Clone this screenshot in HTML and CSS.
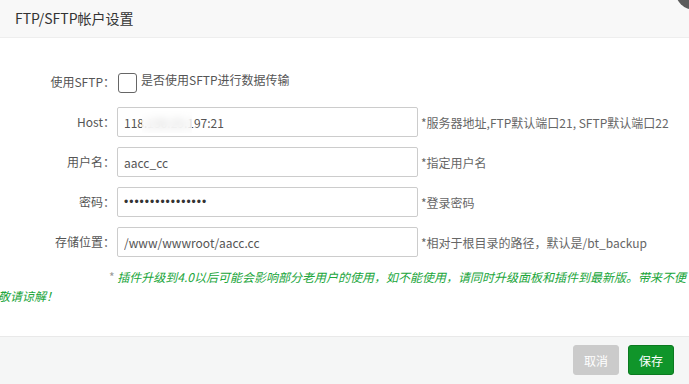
FILE: index.html
```html
<!DOCTYPE html>
<html lang="zh-CN">
<head>
  <meta charset="UTF-8" />
  <title>FTP/SFTP帐户设置</title>
  <link rel="stylesheet" href="styles.css">
</head>
<body>
  <div class="layer">
    <div class="layer-title">FTP/SFTP帐户设置</div>
    <span class="layer-close"></span>

    <div class="layer-content">
      <div class="line">
        <span class="tname">使用SFTP：</span>
        <label class="check-wrap">
          <span class="check-box"></span>
          <span>是否使用SFTP进行数据传输</span>
        </label>
      </div>
      <div class="line">
        <span class="tname">Host：</span>
        <div class="field">
          <input class="bt-input" type="text" value="118.130.25.197:21" />
          <span class="mask"></span>
        </div>
        <span class="tips">*服务器地址,FTP默认端口21, SFTP默认端口22</span>
      </div>
      <div class="line">
        <span class="tname">用户名：</span>
        <input class="bt-input" type="text" value="aacc_cc" />
        <span class="tips">*指定用户名</span>
      </div>
      <div class="line">
        <span class="tname">密码：</span>
        <input class="bt-input pwd" type="password" value="aacc_cc_password" />
        <span class="tips">*登录密码</span>
      </div>
      <div class="line">
        <span class="tname">存储位置：</span>
        <input class="bt-input" type="text" value="/www/wwwroot/aacc.cc" />
        <span class="tips">*相对于根目录的路径，默认是/bt_backup</span>
      </div>
      <p class="notice"><span class="star">*</span> <em>插件升级到4.0以后可能会影响部分老用户的使用，如不能使用，请同时升级面板和插件到最新版。带来不便<br>敬请谅解！</em></p>
    </div>

    <div class="layer-btn">
      <button class="btn btn-cancel">取消</button>
      <button class="btn btn-save">保存</button>
    </div>
  </div>
</body>
</html>
```

FILE: styles.css
```css
body {
  margin: 0;
  font-family: "Noto Sans CJK SC", "Noto Sans", sans-serif;
  font-size: 12px;
  color: #555;
  background: #fff;
  overflow: hidden;
}

.layer {
  position: relative;
  height: 100vh;
  display: flex;
  flex-direction: column;
}

.layer-title {
  height: 37px;
  line-height: 36px;
  padding: 0 15px;
  font-size: 14px;
  color: #333;
  background: #f8f8f8;
  border-bottom: 1px solid #eee;
}

.layer-close {
  position: absolute;
  right: -26px;
  top: -30px;
  width: 40px;
  height: 40px;
  border-radius: 50%;
  background: #5c5c5c;
}

.layer-content {
  flex: 1;
  padding-top: 29px;
}

.line {
  display: flex;
  align-items: center;
  height: 30px;
  margin-bottom: 10px;
}

.tname {
  width: 115px;
  padding-right: 2px;
  text-align: right;
  color: #555;
  position: relative;
  top: -1px;
}

.check-wrap {
  display: flex;
  align-items: center;
  color: #555;
  margin-left: 1px;
}

.check-wrap span:last-child {
  position: relative;
  top: -3px;
}

.check-box {
  width: 17px;
  height: 18px;
  border: 1px solid #666;
  border-radius: 3px;
  margin-right: 4px;
  margin-top: 2px;
}

.field {
  position: relative;
  display: flex;
}

.bt-input {
  width: 301px;
  height: 30px;
  box-sizing: border-box;
  border: 1px solid #ccc;
  border-radius: 2px;
  padding: 0 6px;
  font-family: inherit;
  font-size: 12px;
  color: #555;
  outline: none;
}

.bt-input.pwd {
  font-family: "Liberation Sans", sans-serif;
  letter-spacing: 1px;
  color: #333;
}

.mask {
  position: absolute;
  left: 25px;
  top: 3px;
  width: 50px;
  height: 23px;
  background: rgba(255, 255, 255, 0.65);
  backdrop-filter: blur(4px);
}

.tips {
  margin-left: 3px;
  color: #666;
}

.notice {
  margin: 7px 0 0 -2px;
  width: 720px;
  line-height: 19px;
  text-indent: 111px;
  white-space: nowrap;
}

.notice .star {
  color: #999;
}

.notice em {
  color: #20a53a;
  font-style: italic;
}

.layer-btn {
  height: 48px;
  border-top: 1px solid #e9e9e9;
  background: #f5f6f6;
  display: flex;
  justify-content: flex-end;
  align-items: flex-start;
  gap: 9px;
  padding: 8px 15px 0 0;
  box-sizing: border-box;
}

.btn {
  height: 30px;
  padding: 0 10px;
  border-radius: 3px;
  font-family: inherit;
  font-size: 12px;
  color: #fff;
  cursor: pointer;
}

.btn-cancel {
  background: #cbcbcb;
  border: 1px solid #cbcbcb;
}

.btn-save {
  background: #10952a;
  border: 1px solid #0b7a20;
}
```
